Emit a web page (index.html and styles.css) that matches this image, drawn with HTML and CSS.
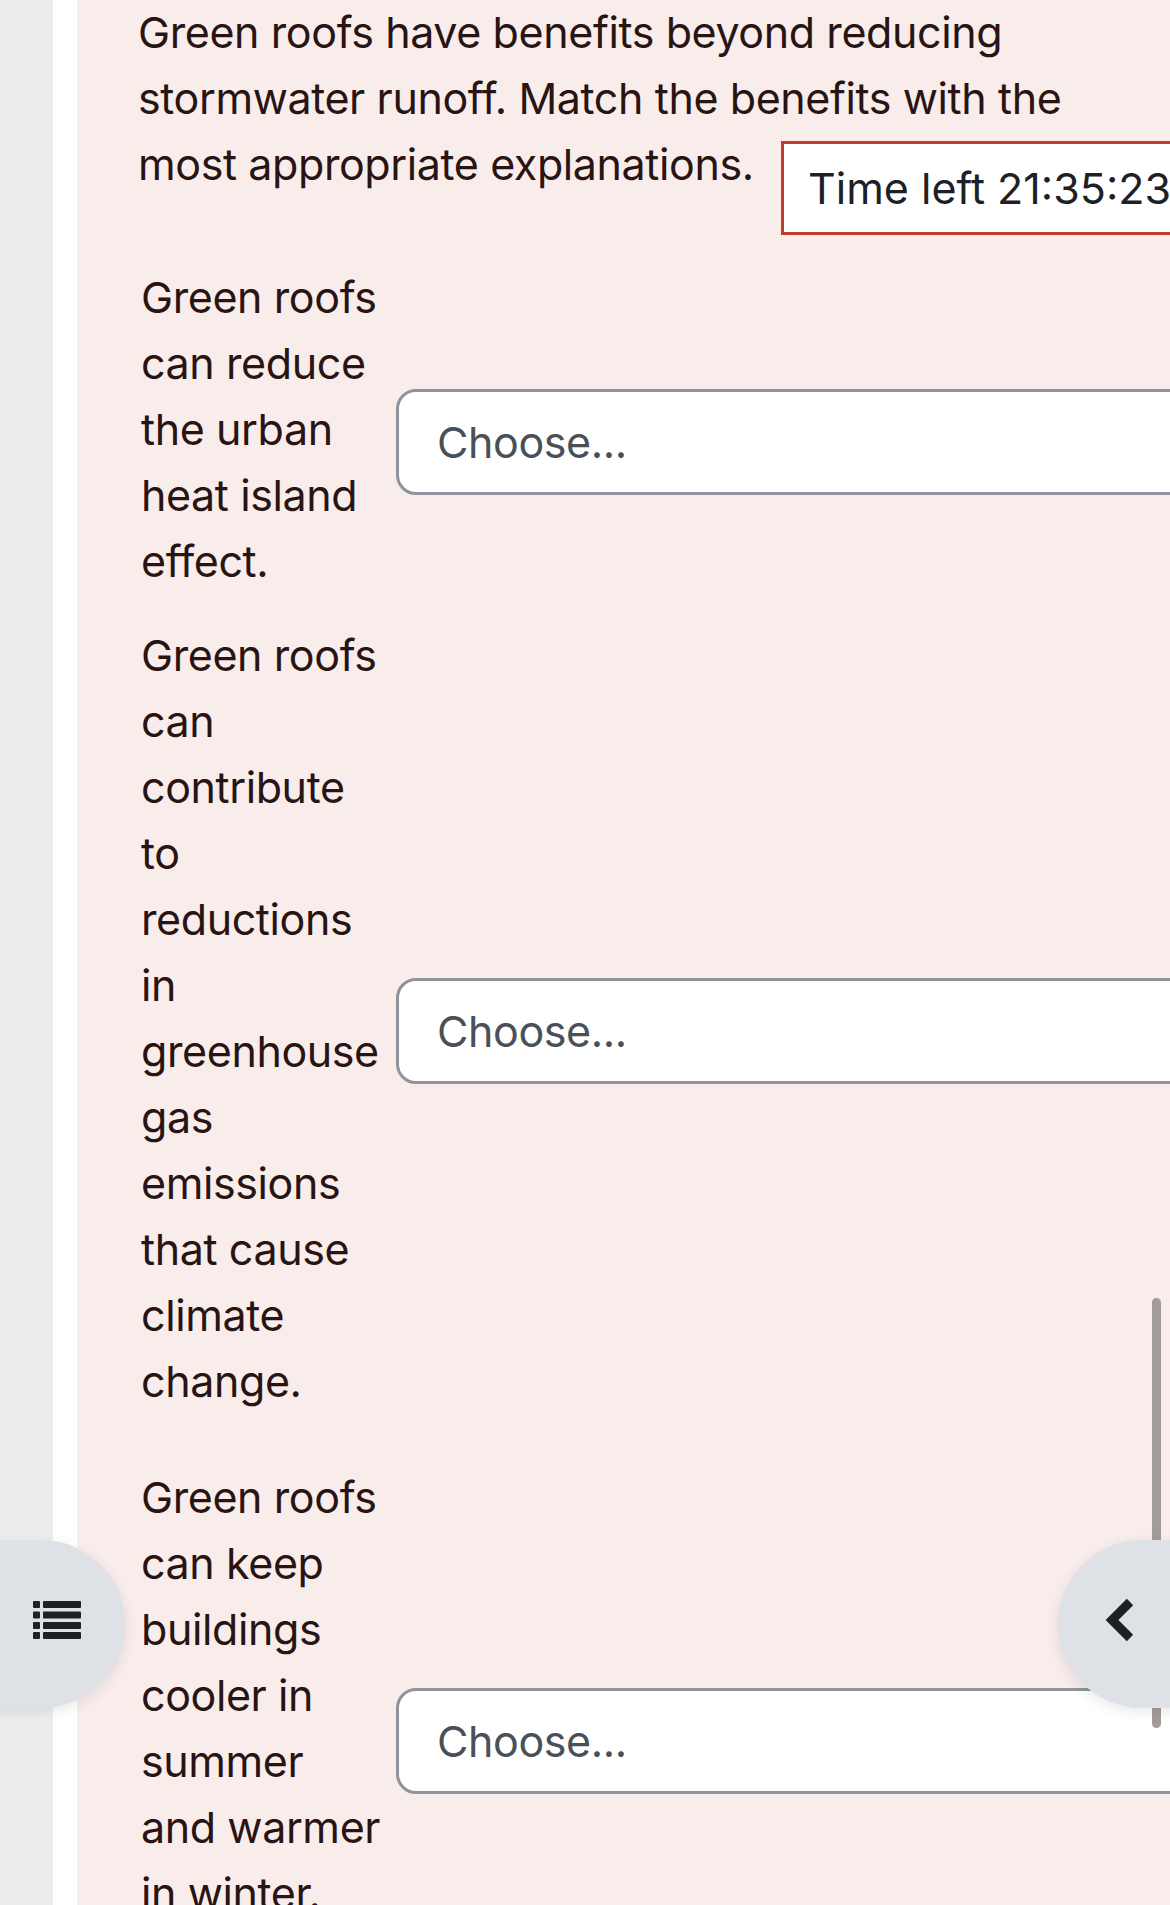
FILE: index.html
```html
<!DOCTYPE html>
<html lang="en">
<head>
<meta charset="utf-8">
<title>Quiz question</title>
<link rel="stylesheet" href="styles.css">
</head>
<body>
<div class="page">
  <div class="gutter"></div>
  <main class="region">
    <div class="formulation">
      <p class="qtext">Green roofs have benefits beyond reducing stormwater runoff. Match the benefits with the most appropriate explanations.</p>
      <div class="answers">
        <div class="row">
          <div class="label">Green roofs can reduce the urban heat island effect.</div>
          <div class="choice">Choose...</div>
        </div>
        <div class="row row--gap-sm">
          <div class="label">Green roofs can contribute to reductions in greenhouse gas emissions that cause climate change.</div>
          <div class="choice">Choose...</div>
        </div>
        <div class="row row--gap-lg">
          <div class="label">Green roofs can keep buildings cooler in summer and warmer in winter.</div>
          <div class="choice choice--low">Choose...</div>
        </div>
      </div>
    </div>
  </main>
</div>

<div class="timer">Time left 21:35:23</div>

<div class="scrollbar"></div>

<div class="drawer-toggle drawer-toggle--left">
  <svg class="icon-list" width="48" height="38" viewBox="0 0 48 38" aria-hidden="true">
    <rect x="0" y="0" width="7" height="7" rx="1"/>
    <rect x="10" y="0" width="38" height="7" rx="1"/>
    <rect x="0" y="10.5" width="7" height="7" rx="1"/>
    <rect x="10" y="10.5" width="38" height="7" rx="1"/>
    <rect x="0" y="21" width="7" height="7" rx="1"/>
    <rect x="10" y="21" width="38" height="7" rx="1"/>
    <rect x="0" y="31" width="7" height="7" rx="1"/>
    <rect x="10" y="31" width="38" height="7" rx="1"/>
  </svg>
</div>

<div class="drawer-toggle drawer-toggle--right">
  <svg class="icon-chevron" width="40" height="50" viewBox="0 0 40 50" aria-hidden="true">
    <path d="M30 7 L12 25 L30 43" fill="none" stroke="#1d2125" stroke-width="9" stroke-linejoin="miter" stroke-linecap="butt"/>
  </svg>
</div>
</body>
</html>
```

FILE: styles.css
```css
html, body {
  margin: 0;
  padding: 0;
  overflow: hidden;
}

body {
  width: 1170px;
  height: 1905px;
  position: relative;
  background: #ededed;
  font-family: Inter, "Noto Sans", "Liberation Sans", sans-serif;
  font-size: 43px;
  letter-spacing: -0.4px;
  line-height: 66px;
  color: #291414;
}

.page {
  display: flex;
  width: 1170px;
  min-height: 1905px;
}

.gutter {
  flex: 0 0 53px;
  background: #ededed;
}

.region {
  flex: 1;
  background: #ffffff;
  padding-left: 24px;
  display: flex;
  min-width: 0;
}

.formulation {
  flex: 1;
  background: #f9edeb;
  padding-left: 61px;
  margin-top: -1px;
  min-width: 0;
}

.qtext {
  margin: 0 0 67px 0;
  max-width: 985px;
}

.answers {
  display: flex;
  flex-direction: column;
  padding-left: 3px;
}

.row {
  display: flex;
  align-items: center;
}

.row--gap-sm {
  margin-top: 28px;
}

.row--gap-lg {
  margin-top: 50px;
}

.label {
  flex: 0 0 244px;
  margin-right: 11px;
}

.choice {
  flex: 0 0 auto;
  width: 820px;
  box-sizing: border-box;
  margin-top: 26px;
  padding: 17px 38px;
  background: #ffffff;
  border: 3px solid #8f949c;
  border-radius: 20px;
  color: #495057;
  white-space: nowrap;
}

.choice--low {
  margin-top: 92px;
}

.timer {
  position: absolute;
  left: 781px;
  top: 141px;
  padding: 11px 24px;
  background: #ffffff;
  border: 3px solid #c23b2b;
  color: #1d2125;
  letter-spacing: 0;
  white-space: nowrap;
}

.scrollbar {
  position: absolute;
  left: 1152px;
  top: 1298px;
  width: 9px;
  height: 430px;
  border-radius: 5px;
  background: #a19b99;
}

.drawer-toggle {
  position: absolute;
  top: 1540px;
  height: 168px;
  box-sizing: border-box;
  background: #dee2e6;
  box-shadow: 0 4px 14px rgba(0, 0, 0, 0.09);
  display: flex;
  align-items: flex-start;
}

.drawer-toggle--left {
  left: -60px;
  width: 185px;
  border-radius: 0 84px 84px 0;
  padding: 61px 0 0 93px;
}

.drawer-toggle--right {
  left: 1058px;
  width: 200px;
  border-radius: 84px 0 0 84px;
  padding: 55px 0 0 42px;
}

.icon-list {
  display: block;
  fill: #1d2125;
}

.icon-chevron {
  display: block;
}
```
